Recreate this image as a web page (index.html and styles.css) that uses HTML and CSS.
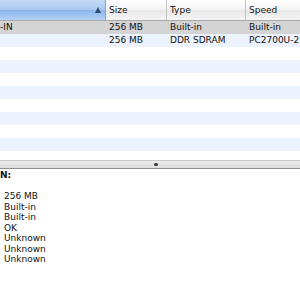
FILE: index.html
```html
<!DOCTYPE html>
<html>
<head>
<meta charset="utf-8">
<link rel="stylesheet" href="styles.css">
</head>
<body>
<div class="table">
  <div class="header">
    <div class="hcell sel"><span class="arrow"></span></div>
    <div class="hcell">Size</div>
    <div class="hcell">Type</div>
    <div class="hcell last">Speed</div>
  </div>
  <div class="row selrow">
    <div class="cell first">-IN</div>
    <div class="cell num">256 MB</div>
    <div class="cell">Built-in</div>
    <div class="cell">Built-in</div>
  </div>
  <div class="row odd">
    <div class="cell first"></div>
    <div class="cell num">256 MB</div>
    <div class="cell">DDR SDRAM</div>
    <div class="cell">PC2700U-2</div>
  </div>
  <div class="row"></div>
  <div class="row odd"></div>
  <div class="row"></div>
  <div class="row odd"></div>
  <div class="row"></div>
  <div class="row odd"></div>
  <div class="row"></div>
  <div class="row odd"></div>
  <div class="row short"></div>
</div>
<div class="splitter"><span class="dimple"></span></div>
<div class="detail">
  <div class="title">N:</div>
  <div class="values">
    <div>256 MB</div>
    <div>Built-in</div>
    <div>Built-in</div>
    <div>OK</div>
    <div>Unknown</div>
    <div>Unknown</div>
    <div>Unknown</div>
  </div>
</div>
</body>
</html>
```
FILE: styles.css
```css
html, body {
  margin: 0;
  padding: 0;
  background: #fff;
  width: 300px;
  height: 300px;
  overflow: hidden;
  font-family: "DejaVu Sans", sans-serif;
  font-size: 9px;
  color: #111;
}
.table {
  display: flex;
  flex-direction: column;
}
.header {
  display: grid;
  grid-template-columns: 106px 61px 79px 1fr;
  height: 20px;
  border-bottom: 1px solid #a8a8a8;
  background: linear-gradient(#ffffff, #f3f3f3 50%, #e8e8e8 51%, #f4f4f4);
}
.hcell {
  display: flex;
  align-items: center;
  padding-left: 3px;
  border-right: 1px solid #c3c3c3;
  white-space: nowrap;
  overflow: hidden;
}
.hcell.last { border-right: none; }
.hcell.sel {
  background: linear-gradient(#c5dbf6, #a8c8f0 50%, #8bb5ea 51%, #b3d1f5);
  justify-content: flex-end;
  padding-right: 4px;
  border-right: 1px solid #8aa3c6;
}
.arrow {
  width: 0;
  height: 0;
  border-left: 3.5px solid transparent;
  border-right: 3.5px solid transparent;
  border-bottom: 6px solid #2f4a6e;
}
.row {
  display: grid;
  grid-template-columns: 106px 61px 79px 1fr;
  height: 13px;
  align-items: center;
  white-space: nowrap;
}
.row.odd { background: #edf3fe; }
.row.selrow { background: #d4d4d4; }
.row.short { height: 9px; }
.cell {
  padding-left: 3px;
  overflow: hidden;
  line-height: 13px;
}
.cell.first { padding-left: 0; }
.cell.num {
  text-align: right;
  padding-right: 29px;
}
.splitter {
  height: 7px;
  background: linear-gradient(#ececec, #dcdcdc);
  border-top: 1px solid #c8c8c8;
  border-bottom: 1px solid #8e8e8e;
  display: flex;
  justify-content: center;
  align-items: center;
  padding-left: 12px;
}
.dimple {
  width: 4px;
  height: 3px;
  border-radius: 2px;
  background: #3a3a3a;
}
.title {
  font-weight: bold;
  line-height: 12px;
}
.values {
  padding-left: 4px;
  padding-top: 10px;
  line-height: 10.5px;
}
```
